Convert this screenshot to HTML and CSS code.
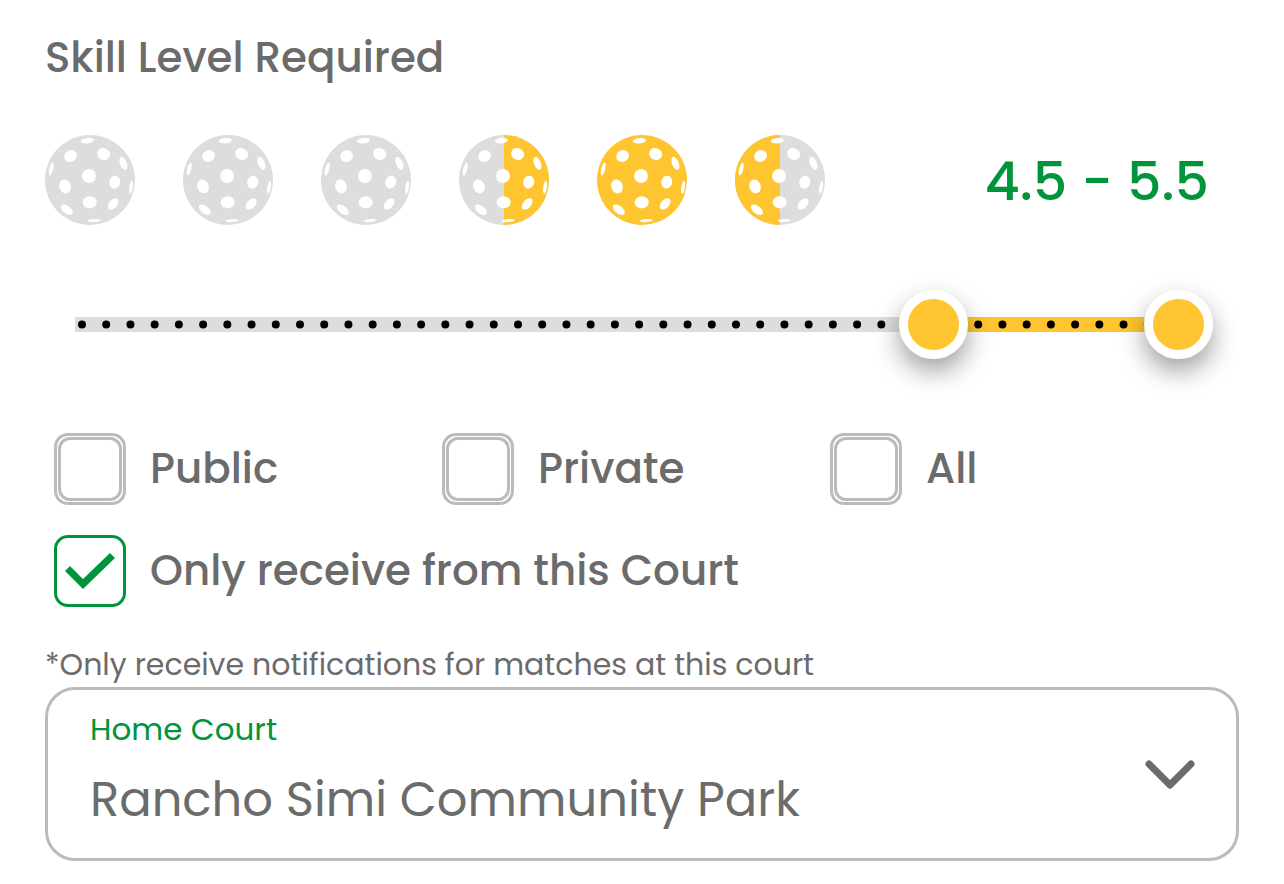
FILE: index.html
```
<!DOCTYPE html>
<html lang="en">
<head>
<meta charset="utf-8">
<meta name="viewport" content="width=device-width, initial-scale=1">
<title>Match notifications</title>
<link rel="stylesheet" href="styles.css">
</head>
<body>
<svg class="defs" aria-hidden="true">
  <symbol id="holes" viewBox="0 0 90 90">
    <g fill="#fff">
      <ellipse cx="42.3" cy="5.7" rx="6.6" ry="2.8" transform="rotate(-5 42.3 5.7)"/>
      <ellipse cx="25.6" cy="21" rx="6.5" ry="5.8" transform="rotate(-30 25.6 21)"/>
      <ellipse cx="58.6" cy="19" rx="6.7" ry="5.7" transform="rotate(25 58.6 19)"/>
      <ellipse cx="78.4" cy="28.4" rx="3.4" ry="6.9" transform="rotate(-22 78.4 28.4)"/>
      <ellipse cx="6.2" cy="34" rx="2" ry="6.6" transform="rotate(14 6.2 34)"/>
      <circle cx="44" cy="41" r="6.9"/>
      <ellipse cx="20" cy="51.4" rx="5.7" ry="7.1" transform="rotate(-20 20 51.4)"/>
      <ellipse cx="69.7" cy="47.1" rx="5.5" ry="6.5" transform="rotate(15 69.7 47.1)"/>
      <ellipse cx="86.1" cy="52.2" rx="1.8" ry="6.6" transform="rotate(8 86.1 52.2)"/>
      <ellipse cx="44.7" cy="67.3" rx="7" ry="6.1"/>
      <ellipse cx="68.2" cy="68.9" rx="4.1" ry="6.7" transform="rotate(42 68.2 68.9)"/>
      <ellipse cx="21.8" cy="74.7" rx="7" ry="3.8" transform="rotate(38 21.8 74.7)"/>
      <ellipse cx="49.3" cy="85.6" rx="6.6" ry="1.5" transform="rotate(-4 49.3 85.6)"/>
    </g>
  </symbol>
</svg>
<form class="settings">
  <h1 class="title">Skill Level Required</h1>

  <div class="rating">
    <div class="balls">
      <svg class="ball" viewBox="0 0 90 90"><circle class="off" cx="45" cy="45" r="45"/><use href="#holes"/></svg>
      <svg class="ball" viewBox="0 0 90 90"><circle class="off" cx="45" cy="45" r="45"/><use href="#holes"/></svg>
      <svg class="ball" viewBox="0 0 90 90"><circle class="off" cx="45" cy="45" r="45"/><use href="#holes"/></svg>
      <svg class="ball" viewBox="0 0 90 90"><circle class="off" cx="45" cy="45" r="45"/><path class="on" d="M45 0a45 45 0 0 1 0 90z"/><use href="#holes"/></svg>
      <svg class="ball" viewBox="0 0 90 90"><circle class="on" cx="45" cy="45" r="45"/><use href="#holes"/></svg>
      <svg class="ball" viewBox="0 0 90 90"><circle class="off" cx="45" cy="45" r="45"/><path class="on" d="M45 0a45 45 0 0 0 0 90z"/><use href="#holes"/></svg>
    </div>
    <output class="range-text">4.5 - 5.5</output>
  </div>

  <div class="slider">
    <div class="fill" style="left:77.78%;right:0%"></div>
    <svg class="ticks" aria-hidden="true"><line x1="0" y1="50%" x2="100%" y2="50%" pathLength="45"/></svg>
    <input class="thumb" type="range" min="1" max="5.5" step="0.5" value="4.5" aria-label="Minimum skill level">
    <input class="thumb" type="range" min="1" max="5.5" step="0.5" value="5.5" aria-label="Maximum skill level">
  </div>

  <div class="options">
    <label class="option"><input class="box" type="checkbox">Public</label>
    <label class="option"><input class="box" type="checkbox">Private</label>
    <label class="option"><input class="box" type="checkbox">All</label>
    <label class="option wide"><input class="box" type="checkbox" checked>Only receive from this Court</label>
  </div>

  <p class="note">*Only receive notifications for matches at this court</p>
  <div class="field">
    <label class="field-label" for="court">Home Court</label>
    <select class="field-select" id="court"><option>Rancho Simi Community Park</option></select>
    <svg class="chevron" viewBox="0 0 50 30" aria-hidden="true"><path d="M4 4l21 21L46 4"/></svg>
  </div>
</form>
</body>
</html>
```
FILE: styles.css
```
* {
  box-sizing: border-box;
}

body {
  margin: 0;
  background: #fff;
  color: #6b6b6b;
  font-family: Poppins, Inter, sans-serif;
}

.defs {
  position: absolute;
  width: 0;
  height: 0;
}

.settings {
  padding: 28px 45px 23px;
}

.title {
  margin: 0 0 47px;
  font-size: 42px;
  font-weight: 500;
  line-height: 60px;
}

.rating {
  display: flex;
  align-items: center;
  justify-content: space-between;
  padding-right: 30px;
}

.balls {
  display: flex;
  gap: 48px;
}

.ball {
  display: block;
  width: 90px;
  height: 90px;
}

.off {
  fill: #ddd;
}

.on {
  fill: #ffc531;
}

.range-text {
  padding-top: 2px;
  color: #00953b;
  font-size: 54px;
  font-weight: 500;
  line-height: 80px;
  white-space: nowrap;
}

.slider {
  position: relative;
  height: 15px;
  margin: 92px 60px 101px 30px;
  padding: 0 7px;
  background: #ddd;
}

.fill {
  position: absolute;
  top: 0;
  bottom: 0;
  background: #ffc531;
}

.ticks {
  position: relative;
  display: block;
  width: 100%;
  height: 15px;
  overflow: visible;
}

.ticks line {
  stroke: #000;
  stroke-width: 8;
  stroke-linecap: round;
  stroke-dasharray: 0 1;
}

/* The two inputs share the track; only their thumbs take the pointer. */
.thumb {
  position: absolute;
  top: -27px;
  left: -34px;
  width: calc(100% + 68px);
  height: 69px;
  margin: 0;
  appearance: none;
  background: none;
  pointer-events: none;
}

.thumb::-webkit-slider-thumb {
  appearance: none;
  width: 69px;
  height: 69px;
  border: 9px solid #fff;
  border-radius: 50%;
  background: #ffc531;
  box-shadow: 0 12px 26px rgba(0, 0, 0, 0.38);
  pointer-events: auto;
}

.options {
  display: grid;
  grid-template-columns: repeat(3, 1fr);
  row-gap: 30px;
  padding: 0 21px 0 9px;
}

.option {
  display: flex;
  align-items: center;
  gap: 24px;
  font-size: 42px;
  font-weight: 500;
  line-height: 60px;
}

.wide {
  grid-column: 1 / -1;
}

.box {
  position: relative;
  flex: none;
  width: 72px;
  height: 72px;
  margin: 0;
  appearance: none;
  border: 3px solid #bbb;
  border-radius: 14px;
}

.box::before {
  content: "";
  position: absolute;
  inset: 1px;
  border: 3px solid #bbb;
  border-radius: 12px;
}

.box:checked {
  border-color: #00953b;
}

.box:checked::before {
  inset: 0;
  border: 0;
  border-radius: 0;
  background: #00953b;
  clip-path: polygon(8px 33px, 13px 28px, 26px 41px, 53px 15px, 58px 20px, 26px 51px);
}

.note {
  margin: 36px 0 0;
  font-size: 30px;
  line-height: 44px;
}

.field {
  position: relative;
  padding: 15px 42px 26px;
  border: 3px solid #bbb;
  border-radius: 30px;
}

.field-label {
  display: block;
  color: #00953b;
  font-size: 31px;
  line-height: 48px;
}

.field-select {
  display: block;
  width: 100%;
  margin-top: 15px;
  padding: 0;
  appearance: none;
  border: 0;
  background: none;
  color: inherit;
  font: inherit;
  font-size: 48px;
  line-height: 64px;
}

.chevron {
  position: absolute;
  top: 50%;
  right: 41px;
  width: 50px;
  height: 30px;
  margin-top: -14px;
  pointer-events: none;
}

.chevron path {
  fill: none;
  stroke: #6b6b6b;
  stroke-width: 7;
  stroke-linecap: round;
  stroke-linejoin: round;
}
```
